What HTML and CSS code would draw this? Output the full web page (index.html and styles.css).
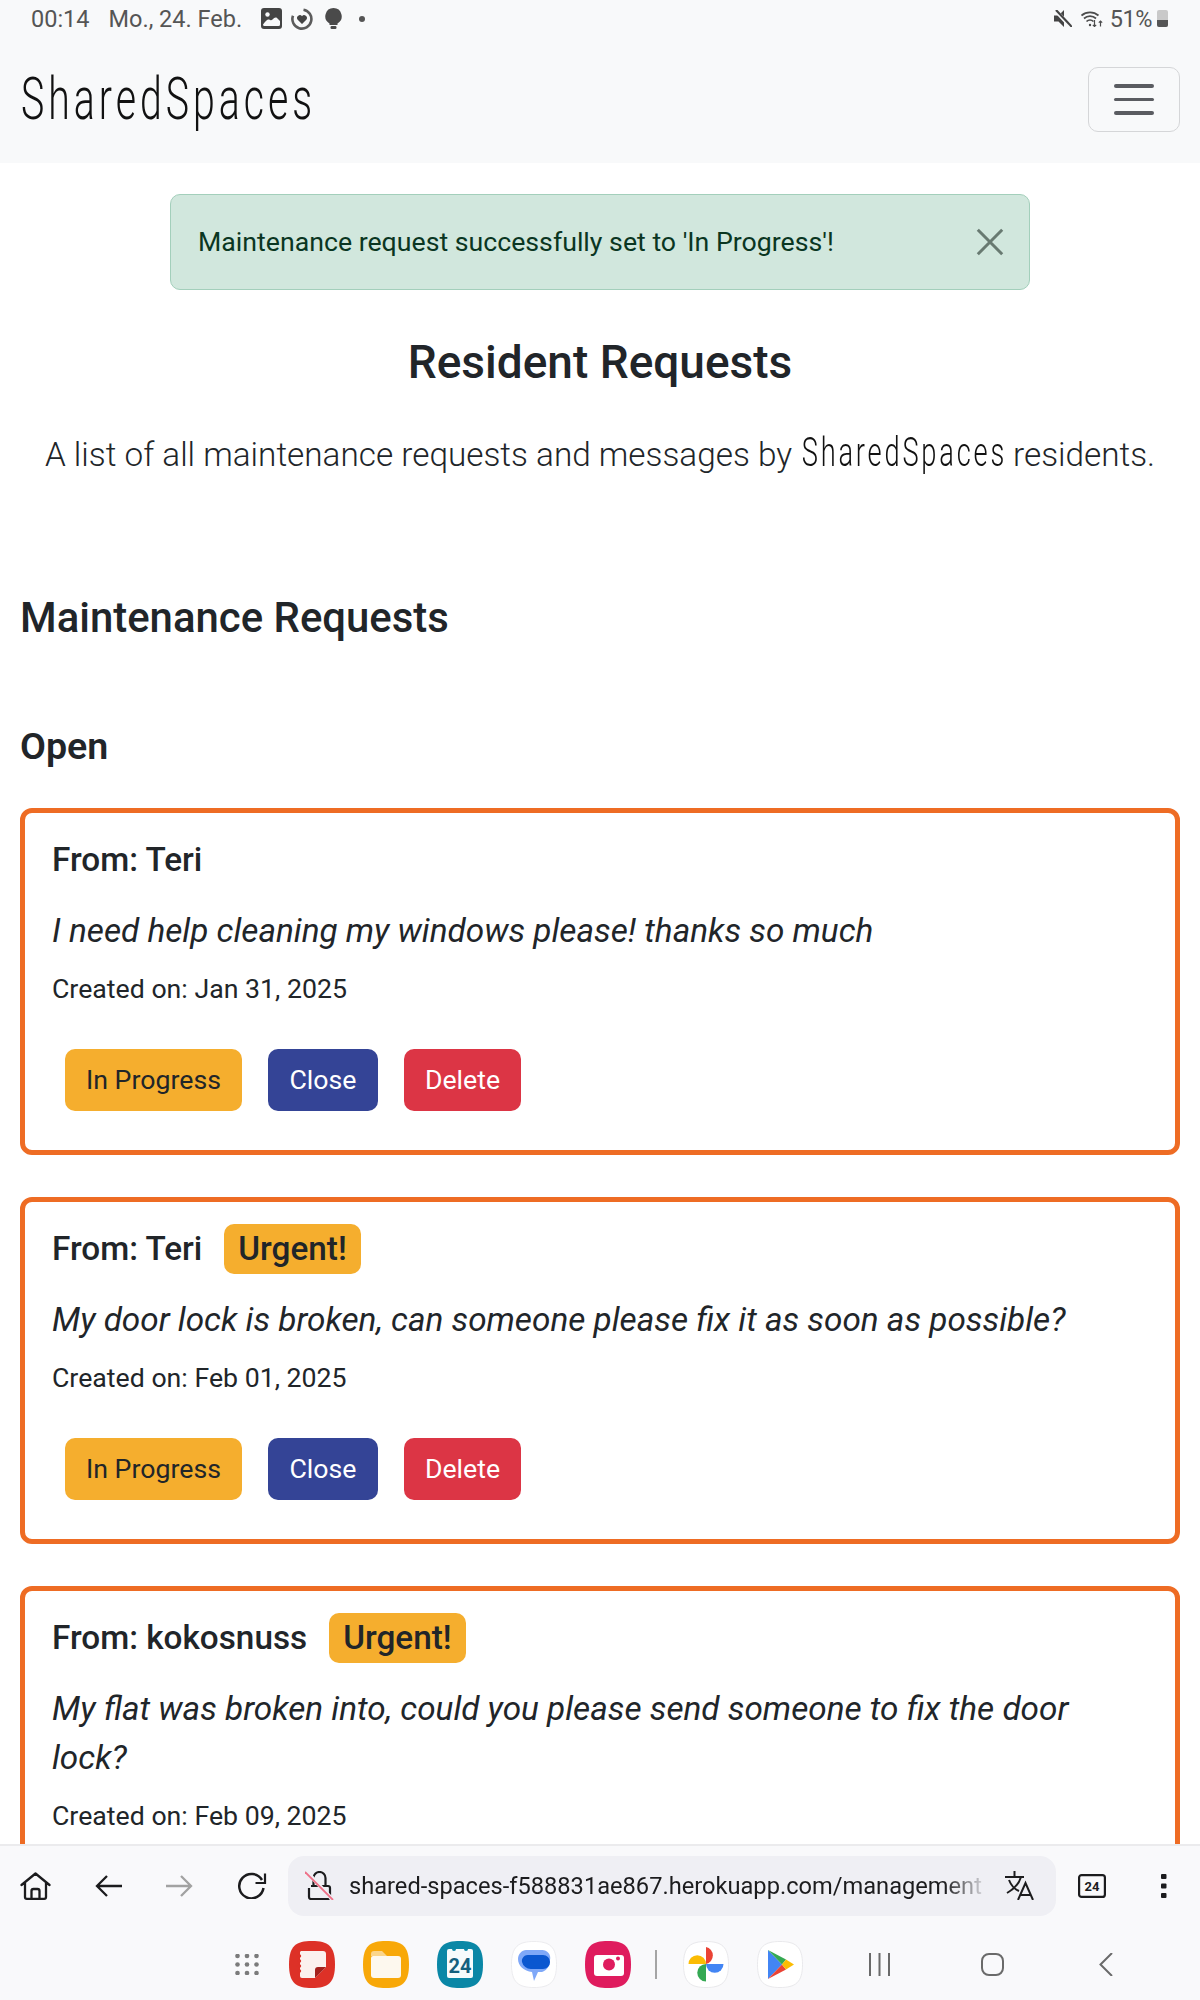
FILE: index.html
```html
<!DOCTYPE html>
<html lang="de">
<head>
<meta charset="utf-8">
<title>SharedSpaces</title>
<link rel="stylesheet" href="styles.css">
</head>
<body>
<div class="screen">
  <header class="top">
    <div class="status">
      <div class="status-left">
        <span class="clock">00:14</span>
        <span class="date">Mo., 24. Feb.</span>
        <svg class="s-img" viewBox="0 0 21 21" width="21" height="21"><rect width="21" height="21" rx="3" fill="#444"/><circle cx="6.500" cy="6.500" r="2.200" fill="#f8f9fa"/><path d="M2 16.500c3-4 4.500-5.500 6-5 1.500.5 2 1.500 3.500 0s3-2.500 4.500-1.500l3 3v3.500a1.500 1.500 0 0 1-1.500 1.500h-14a1.500 1.500 0 0 1-1.500-1.500z" fill="#f8f9fa"/></svg>
        <svg class="s-ring" viewBox="0 0 22 22" width="22" height="22"><path d="M12.500 1.700a9.500 9.500 0 1 1-10.500 6" fill="none" stroke="#5c5c5c" stroke-width="2.600"/><path d="M11 16l-4.500-4.500a2.800 2.800 0 0 1 4.500-3.300 2.800 2.800 0 0 1 4.500 3.300z" fill="#444"/></svg>
        <svg class="s-bulb" viewBox="0 0 17 21" width="17" height="21"><path d="M8.500 0a8.300 8.300 0 0 0-4 15.500v1.500h8v-1.500a8.300 8.300 0 0 0-4-15.500z" fill="#4a4a4a"/><rect x="5.500" y="18" width="6" height="3" rx="1.200" fill="#4a4a4a"/></svg>
        <span class="dot"></span>
      </div>
      <div class="status-right">
        <svg viewBox="0 0 18 17" width="18" height="17"><path d="M0 5.500h4.500L10 0v17l-5.500-5.500H0z" fill="#444"/><path d="M1 0l16 17" stroke="#f8f9fa" stroke-width="4"/><path d="M2 0l16 17" stroke="#444" stroke-width="2.200"/></svg>
        <svg class="s-wifi" viewBox="0 0 22 17" width="22" height="17" fill="none" stroke="#4c4c4c" stroke-width="1.700"><path d="M.5 5.500a13 13 0 0 1 17 0M3 8.500a9 9 0 0 1 12 0M5.500 11.500a5 5 0 0 1 7 0"/><circle cx="9" cy="15" r="1.200" fill="#4c4c4c" stroke="none"/><path d="M13.500 10v6.500M11.800 14.800l1.700 1.700 1.700-1.700M19.500 16.500V11M17.800 12.700l1.700-1.700 1.700 1.700" stroke-width="1.200"/></svg>
        <span class="batt-text">51%</span>
        <span class="batt"><span class="batt-fill"></span></span>
      </div>
    </div>
    <nav class="navbar">
      <a class="brand">SharedSpaces</a>
      <button class="toggler" aria-label="Menü"><span></span><span></span><span></span></button>
    </nav>
  </header>

  <main class="content">
    <div class="alert">
      <span>Maintenance request successfully set to 'In Progress'!</span>
      <svg class="alert-close" viewBox="0 0 16 16" width="30" height="30"><path d="M1.500 1.500l13 13M14.500 1.500l-13 13" stroke="#687a71" stroke-width="1.600" fill="none"/></svg>
    </div>
    <h1 class="title">Resident Requests</h1>
    <p class="lead">A list of all maintenance requests and messages by <span class="brand-inline">SharedSpaces</span> residents.</p>
    <h2 class="section">Maintenance Requests</h2>
    <h3 class="sub">Open</h3>

    <article class="card">
      <div class="from"><span>From: Teri</span></div>
      <p class="msg">I need help cleaning my windows please! thanks so much</p>
      <p class="created">Created on: Jan 31, 2025</p>
      <div class="actions"><button class="btn warn">In Progress</button><button class="btn navy">Close</button><button class="btn red">Delete</button></div>
    </article>

    <article class="card">
      <div class="from"><span>From: Teri</span><span class="badge">Urgent!</span></div>
      <p class="msg">My door lock is broken, can someone please fix it as soon as possible?</p>
      <p class="created">Created on: Feb 01, 2025</p>
      <div class="actions"><button class="btn warn">In Progress</button><button class="btn navy">Close</button><button class="btn red">Delete</button></div>
    </article>

    <article class="card">
      <div class="from"><span>From: kokosnuss</span><span class="badge">Urgent!</span></div>
      <p class="msg">My flat was broken into, could you please send someone to fix the door lock?</p>
      <p class="created">Created on: Feb 09, 2025</p>
    </article>
  </main>

  <footer class="bottom">
    <div class="urlrow">
      <svg class="ic" viewBox="0 0 31 28" width="31" height="28" fill="none" stroke="#1c1c1e" stroke-width="2.300" stroke-linejoin="round" stroke-linecap="round"><path d="M1.500 13L15.500 1.500 29.500 13M5 10.500V25a1.800 1.800 0 0 0 1.800 1.800h17.400A1.800 1.800 0 0 0 26 25V10.500M11.500 26.800V19a2 2 0 0 1 2-2h4a2 2 0 0 1 2 2v7.800"/></svg>
      <svg class="ic back" viewBox="0 0 27 22" width="27" height="22" fill="none" stroke="#1c1c1e" stroke-width="2.300"><path d="M27 11H2M12 1L2 11l10 10"/></svg>
      <svg class="ic fwd" viewBox="0 0 27 22" width="27" height="22" fill="none" stroke="#a2a2a2" stroke-width="2.300"><path d="M0 11h25M15 1l10 10-10 10"/></svg>
      <svg class="ic reload" viewBox="0 0 30 27" width="30" height="27" fill="none" stroke="#1c1c1e" stroke-width="2.500"><path d="M25 8A12.200 12.200 0 1 0 26.500 16"/><path d="M28 1.500V11H18.500" stroke-width="2.200"/></svg>
      <div class="urlbar">
        <svg class="lock" viewBox="0 0 29 29" width="29" height="29" fill="none"><path d="M4 17v9a2 2 0 0 0 2 2h17a2 2 0 0 0 2-2v-9a2 2 0 0 0-2-2H6M8.500 15V7a6 6 0 0 1 12 0v8" stroke="#1c1c1e" stroke-width="2.200"/><path d="M1 0l27 29" stroke="#efeff4" stroke-width="4"/><path d="M0 1l28 28" stroke="#ee7088" stroke-width="1.800"/></svg>
        <span class="url">shared-spaces-f588831ae867.herokuapp.com/management</span>
        <svg class="translate" viewBox="0 0 30 29" width="30" height="29" fill="none" stroke="#1c1c1e" stroke-width="2"><path d="M0 6h19M9.500 0v6M16 6c-2 7-7 12-14 16M4 9c2 5 5 9 10 11"/><path d="M13 29l7.500-17L28 29M15.500 24h10"/></svg>
      </div>
      <svg class="ic tabs" viewBox="0 0 28 24" width="28" height="24"><rect x="1.100" y="1.100" width="25.800" height="21.800" rx="2.500" fill="none" stroke="#1c1c1e" stroke-width="2.200"/><text x="14" y="17" text-anchor="middle" class="tabnum">24</text></svg>
      <svg class="ic more" viewBox="0 0 6 24" width="6" height="24" fill="#1c1c1e"><rect width="5.500" height="5" rx="1" y="0"/><rect width="5.500" height="5" rx="1" y="9.500"/><rect width="5.500" height="5" rx="1" y="19"/></svg>
    </div>
    <div class="dock">
      <svg class="grid-ic" viewBox="0 0 24 21" width="24" height="21" fill="#7b7b7b"><circle cx="2.500" cy="2" r="2.300"/><circle cx="12" cy="2" r="2.300"/><circle cx="21.500" cy="2" r="2.300"/><circle cx="2.500" cy="10.500" r="2.300"/><circle cx="12" cy="10.500" r="2.300"/><circle cx="21.500" cy="10.500" r="2.300"/><circle cx="2.500" cy="19" r="2.300"/><circle cx="12" cy="19" r="2.300"/><circle cx="21.500" cy="19" r="2.300"/></svg>
      <div class="apps">
        <svg class="app" viewBox="0 0 46 47" width="46" height="47"><path d="M23 0c16 0 23 5 23 23.500S39 47 23 47 0 42 0 23.500 7 0 23 0z" fill="#dd3127"/><path d="M12 10h22a3 3 0 0 1 3 3v13L26 37H13a2 2 0 0 1-2-2V11z" fill="#fbf1ee"/><g fill="#dd3127"><circle cx="10.500" cy="15" r="1.700"/><circle cx="10.500" cy="20" r="1.700"/><circle cx="10.500" cy="25" r="1.700"/><circle cx="10.500" cy="30" r="1.700"/></g><path d="M26 37v-8a3 3 0 0 1 3-3h8z" fill="#a3211d"/></svg>
        <svg class="app" viewBox="0 0 46 47" width="46" height="47"><path d="M23 0c16 0 23 5 23 23.500S39 47 23 47 0 42 0 23.500 7 0 23 0z" fill="#f8a808"/><path d="M8 13a3 3 0 0 1 3-3h8l5 5H8z" fill="#fbd58a"/><path d="M8 17a2 2 0 0 1 2-2h25a3 3 0 0 1 3 3v16a3 3 0 0 1-3 3H11a3 3 0 0 1-3-3z" fill="#fdf8ee"/></svg>
        <svg class="app" viewBox="0 0 46 47" width="46" height="47"><path d="M23 0c16 0 23 5 23 23.500S39 47 23 47 0 42 0 23.500 7 0 23 0z" fill="#0a87a6"/><rect x="10" y="8" width="26" height="29" rx="2" fill="#f6fbfc"/><circle cx="17" cy="8" r="2" fill="#0a87a6"/><circle cx="29" cy="8" r="2" fill="#0a87a6"/><text x="23" y="32" text-anchor="middle" class="calnum">24</text></svg>
        <svg class="app" viewBox="0 0 46 47" width="46" height="47"><path d="M23 .5c15.500 0 22.500 5 22.500 23S38.500 46.500 23 46.500.5 41.500.5 23.500 7.500.5 23 .5z" fill="#fff" stroke="#ececef"/><path d="M15 9h16a8 8 0 0 1 8 10c0 6-3 10-8 12h-4l-4 9-2-9c-8-1-14-6-14-13 0-5 4-9 8-9z" fill="#7fa8f8"/><path d="M18 14h14a7 7 0 0 1 7 7 7 7 0 0 1-7 7H20a9 9 0 0 1-9-7 6 6 0 0 1 7-7z" fill="#0b57d0"/></svg>
        <svg class="app" viewBox="0 0 46 47" width="46" height="47"><path d="M23 0c16 0 23 5 23 23.500S39 47 23 47 0 42 0 23.500 7 0 23 0z" fill="#df1c5e"/><rect x="9" y="14" width="30" height="21" rx="3" fill="#fff"/><circle cx="24" cy="23.500" r="6" fill="#df1c5e"/><circle cx="33" cy="17.500" r="2" fill="#df1c5e"/></svg>
        <span class="divider"></span>
        <svg class="app" viewBox="0 0 46 47" width="46" height="47"><path d="M23 .5c15.500 0 22.500 5 22.500 23S38.500 46.500 23 46.500.5 41.500.5 23.500 7.500.5 23 .5z" fill="#fff" stroke="#e9e9ec"/><path d="M23 23V6a8.700 8.700 0 0 1 0 17z" fill="#ea4335"/><path d="M23 23h17.500a8.700 8.700 0 0 1-17.500 0z" fill="#4285f4"/><path d="M23 23v17.500a8.700 8.700 0 0 1 0-17.500z" fill="#34a853"/><path d="M23 23H5.500a8.700 8.700 0 0 1 17.500 0z" fill="#fbbc04"/></svg>
        <svg class="app" viewBox="0 0 46 47" width="46" height="47"><path d="M23 .5c15.500 0 22.500 5 22.500 23S38.500 46.500 23 46.500.5 41.500.5 23.500 7.500.5 23 .5z" fill="#fff" stroke="#e9e9ec"/><path d="M11 9l14 14.500L11 38z" fill="#4285f4"/><path d="M11 9l18 9.500-4 5z" fill="#34a853"/><path d="M11 38l18-9.500-4-5z" fill="#ea4335"/><path d="M29 18.500l8 5-8 5-4-5z" fill="#fbbc04"/></svg>
      </div>
      <div class="nav-keys">
        <svg viewBox="0 0 21 23" width="21" height="23" stroke="#6a6a6a" stroke-width="2" fill="none"><path d="M1 0v23M10.500 0v23M20 0v23"/></svg>
        <svg viewBox="0 0 23 23" width="23" height="23" stroke="#6a6a6a" stroke-width="2" fill="none"><rect x="1" y="1" width="21" height="21" rx="7"/></svg>
        <svg viewBox="0 0 14 23" width="14" height="23" stroke="#6a6a6a" stroke-width="2" fill="none"><path d="M13 0L1.500 11.500 13 23"/></svg>
      </div>
    </div>
  </footer>
</div>
</body>
</html>
```
FILE: styles.css
```css
* { box-sizing: border-box; }
html, body { margin: 0; padding: 0; background: #fff; }
body { font-family: Roboto, "Liberation Sans", sans-serif; color: #212529; }
.screen { width: 1200px; height: 2000px; display: flex; flex-direction: column; overflow: hidden; }

.top { background: #f8f9fa; height: 163px; flex: none; }
.status { height: 37px; display: flex; justify-content: space-between; align-items: center; padding: 0 32px 0 31px; color: #555; font-size: 23.5px; }
.status-left, .status-right { display: flex; align-items: center; }
.clock { margin-right: 19px; }
.date { margin-right: 19px; }
.s-ring { margin-left: 9px; }
.s-bulb { margin-left: 12px; }
.dot { width: 6px; height: 6px; border-radius: 50%; background: #555; margin-left: 17px; }
.s-wifi { margin-left: 9px; }
.batt-text { letter-spacing: -0.5px; margin-left: 7px; margin-right: 5px; }
.batt { width: 11px; height: 17px; background: #c9c9c9; border-radius: 2px; display: flex; align-items: flex-end; overflow: hidden; }
.batt-fill { width: 100%; height: 7px; background: #555; }

.navbar { display: flex; justify-content: space-between; align-items: center; padding: 0 20px 0 21px; height: 126px; }
.brand { font-size: 59px; font-weight: 300; letter-spacing: 6px; color: #111; display: inline-block; transform: scaleX(0.665); transform-origin: left center; white-space: nowrap; line-height: 1; margin-top: -4px; }
.toggler { width: 92px; height: 65px; background: transparent; border: 1.5px solid #d5d6d8; border-radius: 10px; display: flex; flex-direction: column; justify-content: center; align-items: center; gap: 10px; padding: 0; margin-top: -1px; }
.toggler span { width: 40px; height: 3.5px; background: #5a5c61; border-radius: 2px; }

.content { flex: 1; min-height: 0; overflow: hidden; padding: 31px 20px 0; }
.alert { width: 860px; height: 96px; margin: 0 0 0 150px; background: #d1e7dd; border: 1.5px solid #a3cfbb; border-radius: 10px; color: #0a3622; font-size: 26.7px; display: flex; align-items: center; justify-content: space-between; padding: 0 24px 0 27px; }
.title { margin: 45px 0 0; font-size: 46px; font-weight: 500; line-height: 55px; text-align: center; }
.lead { margin: 40px 0 0; font-size: 33.3px; font-weight: 300; line-height: 50px; text-align: center; white-space: nowrap; }
.brand-inline { display: inline-block; font-weight: 300; font-size: 41px; letter-spacing: 4.200px; transform: scaleX(0.665); margin: 0 -54px 0 -50px; line-height: 1; color: #111; }
.section { margin: 113px 0 0; font-size: 41.9px; font-weight: 500; line-height: 50px; }
.sub { margin: 81px 0 -3px; font-size: 37.6px; font-weight: 600; line-height: 45px; }

.card { border: 5px solid #ee6c24; border-radius: 12px; padding: 21.5px 27px 39px; margin: 42px 0 0; }
.from { display: flex; align-items: center; gap: 22px; font-size: 33.3px; font-weight: 500; height: 50px; }
.badge { background: #f5ae2e; border-radius: 10px; padding: 0 14px; height: 50px; line-height: 50px; }
.msg { margin: 21.5px 0 0; font-size: 33.3px; font-style: italic; line-height: 49px; }
.created { margin: 13.500px 0 0; font-size: 26.7px; line-height: 41px; }
.actions { display: flex; gap: 26px; padding-left: 13px; margin-top: 39.500px; }
.btn { height: 62px; border: 0; border-radius: 10px; font: 400 26.7px Roboto, sans-serif; padding: 0 21px; }
.warn { background: #f5ae2e; color: #212529; }
.navy { background: #344496; color: #fff; padding: 0 21.5px; }
.red { background: #dc3545; color: #fff; }

.bottom { flex: none; height: 156px; background: #f9f9fb; border-top: 2px solid #ebebed; }
.urlrow { display: flex; align-items: center; height: 79px; padding-left: 20px; }
.ic { flex: none; }
.back { margin-left: 44px; }
.fwd { margin-left: 44px; }
.reload { margin-left: 44px; }
.urlbar { flex: none; margin-left: 21px; width: 768px; height: 60px; background: #efeff4; border-radius: 16px; display: flex; align-items: center; padding: 0 21px 0 17px; }
.lock { flex: none; }
.url { margin-left: 15px; padding-top: 1px; font-size: 23.65px; color: #1c1c1e; white-space: nowrap; -webkit-mask-image: linear-gradient(90deg, #000 94%, rgba(0,0,0,.15) 100%); mask-image: linear-gradient(90deg, #000 94%, rgba(0,0,0,.15) 100%); }
.translate { flex: none; margin-left: auto; }
.tabs { margin-left: 22px; }
.more { margin-left: 55px; }
.tabnum { font: 700 13px Roboto, sans-serif; fill: #1c1c1e; }
.calnum { font: 700 20px Roboto, sans-serif; fill: #14607e; }

.dock { display: flex; align-items: center; height: 75px; padding-top: 3px; }
.grid-ic { margin-left: 235px; flex: none; }
.apps { display: flex; align-items: center; gap: 28px; margin-left: 30px; }
.app { flex: none; }
.divider { width: 2px; height: 29px; background: #a5a5a5; margin: 0 -2px 0 -4px; }
.nav-keys { display: flex; align-items: center; margin-left: 66px; }
.nav-keys svg:nth-child(2) { margin-left: 91px; }
.nav-keys svg:nth-child(3) { margin-left: 95px; }
```
